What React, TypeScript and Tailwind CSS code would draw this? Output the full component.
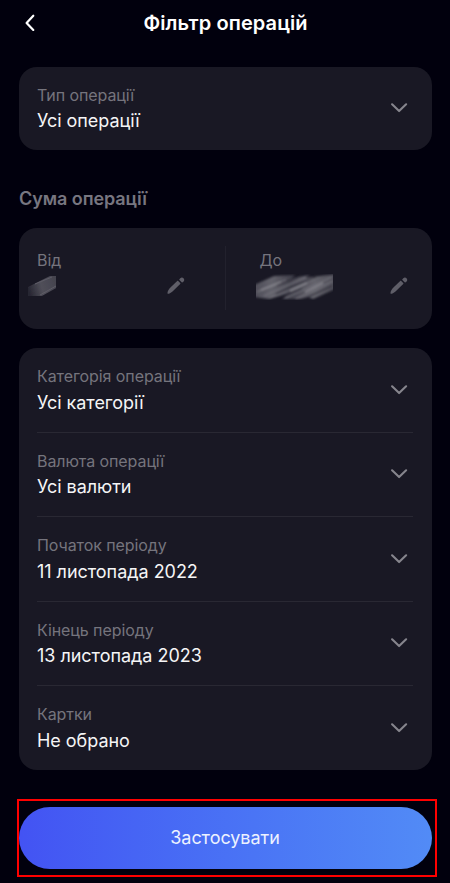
import type { ReactNode } from "react";

const filters = [
  { label: "Категорія операції", value: "Усі категорії" },
  { label: "Валюта операції", value: "Усі валюти" },
  { label: "Початок періоду", value: "11 листопада 2022" },
  { label: "Кінець періоду", value: "13 листопада 2023" },
  { label: "Картки", value: "Не обрано" },
];

function Chevron() {
  return (
    <svg className="mr-[5px] h-[10px] w-[18px] shrink-0" viewBox="0 0 18 10" fill="none">
      <path d="M2.100 1.300 9.100 8.100 16.100 1.300" stroke="#86858d" strokeWidth="2.1" strokeLinecap="round" strokeLinejoin="round" />
    </svg>
  );
}

function Pencil() {
  return (
    <svg className="h-[18px] w-[18px] shrink-0" viewBox="0 0 18 18" fill="#5f5e68">
      <path d="M.7 17.700c-.5-.5 0-2.500.8-3.800.6-1 1.300-1.800 2.200-2.700l6.500-6.200c.3-.3.7-.3 1 0l2 2c.3.3.3.7 0 1l-6.400 6.300c-.9.900-1.700 1.600-2.700 2.200-1.200.8-3 1.600-3.400 1.200Z" />
      <path d="M12.400 4.100c-.3-.3-.3-.6 0-.9l.9-1c1-1 2.400-.8 3.200 0 .8.900 1.100 2.200.1 3.200l-1 .9c-.3.300-.6.300-.9 0Z" />
    </svg>
  );
}

function Field({ label, value }: { label: string; value: string }) {
  return (
    <div className="flex h-full items-center justify-between">
      <div className="pt-[0.500px]">
        <div className="text-[16px] leading-[24px] tracking-[-0.080px] text-[#75747d]">{label}</div>
        <div className="mt-[0.500px] text-[18px] leading-[27px] tracking-[-0.030px] text-[#f5f5f6]">{value}</div>
      </div>
      <Chevron />
    </div>
  );
}

function Card({ className, children }: { className: string; children: ReactNode }) {
  return <section className={`rounded-[18px] bg-[#191824] ${className}`}>{children}</section>;
}

function SmallSmudge() {
  return (
    <svg className="mt-[3px] -ml-[9px] h-[20px] w-[28px]" viewBox="0 0 28 20">
      <defs>
        <linearGradient id="smallFill" x1="0" x2="1" y1="0.6" y2="0.4">
          <stop offset="0" stopColor="#272632" />
          <stop offset="0.45" stopColor="#504f59" />
          <stop offset="1" stopColor="#44434e" />
        </linearGradient>
        <filter id="smallBlur"><feGaussianBlur stdDeviation="0.7" /></filter>
      </defs>
      <g filter="url(#smallBlur)">
        <path d="M0 11 22 0H30V11L12 21H0Z" fill="url(#smallFill)" />
        <path d="m7 8 17-7M12 19l16-9" stroke="#5d5c66" strokeWidth="1" />
      </g>
    </svg>
  );
}

function LargeSmudge() {
  return (
    <svg className="mt-px -ml-[4px] h-[26px] w-[77px]" viewBox="0 0 77 26">
      <defs>
        <linearGradient id="largeFill">
          <stop offset="0" stopColor="#4c4b56" />
          <stop offset="0.22" stopColor="#64636c" />
          <stop offset="0.45" stopColor="#43424d" />
          <stop offset="0.75" stopColor="#64636c" />
          <stop offset="1" stopColor="#4a4953" />
        </linearGradient>
        <filter id="largeBlur" x="-10%" y="-20%" width="120%" height="140%"><feGaussianBlur stdDeviation="1" /></filter>
      </defs>
      <g filter="url(#largeBlur)">
        <path d="M-2 11 18 2 39 1 35 4 54 1 49 4 79 0V15L57 25 52 23 45 25 26 25 35 19 13 25-2 23Z" fill="url(#largeFill)" />
        <path d="M1 18 30 6M8 22 50 3M14 24 59 5M29 24 76 3M40 25 77 7" stroke="#74737c" strokeWidth="1.200" />
        <path d="M21 11 42 3M20 20 60 3M30 22 46 15M52 23 76 12" stroke="#2c2b37" strokeWidth="1.300" />
        <path d="m5 16 20-8M34 17 51 9M49 18l18-9" stroke="#93929a" strokeWidth="1.200" />
      </g>
    </svg>
  );
}

export default function App() {
  return (
    <main className="flex h-[883px] w-[450px] flex-col overflow-hidden bg-[#01000d] font-['Inter','Liberation_Sans',sans-serif]">
      <header className="grid h-[66.500px] shrink-0 grid-cols-[60px_1fr_60px] items-start pt-[8px]">
        <button aria-label="Назад" className="ml-[24px] mt-[6px] w-[12px]">
          <svg className="h-[18px] w-[12px]" viewBox="0 0 12 18" fill="none">
            <path d="M9.300 1.700 2.600 8.900 9.300 15.900" stroke="white" strokeWidth="2.200" strokeLinecap="round" strokeLinejoin="round" />
          </svg>
        </button>
        <h1 className="pl-px text-center text-[20px] leading-[30px] font-semibold tracking-[0.080px] text-white">Фільтр операцій</h1>
      </header>

      <Card className="mx-[18.500px] h-[83.500px] shrink-0 px-[18.500px]">
        <Field label="Тип операції" value="Усі операції" />
      </Card>

      <h2 className="mt-[37px] ml-[19px] h-[40.500px] shrink-0 text-[18px] leading-[24px] font-semibold tracking-[-0.080px] text-[#777680]">Сума операції</h2>

      <Card className="mx-[18.500px] flex h-[101.500px] shrink-0 items-center">
        <div className="flex h-[64px] w-[207px] justify-between border-r border-[#22212d] pr-[40px] pl-[18.500px]">
          <div className="pt-px">
            <div className="text-[16px] leading-[26px] tracking-[-0.080px] text-[#75747d]">Від</div>
            <SmallSmudge />
          </div>
          <div className="pt-[30px]"><Pencil /></div>
        </div>
        <div className="flex h-[64px] flex-1 justify-between pr-[23.500px] pl-[34px]">
          <div className="pt-px">
            <div className="text-[16px] leading-[26px] tracking-[-0.080px] text-[#75747d]">До</div>
            <LargeSmudge />
          </div>
          <div className="pt-[30px]"><Pencil /></div>
        </div>
      </Card>

      <Card className="mx-[18.500px] mt-[19px] h-[421.500px] shrink-0 px-[18.500px]">
        {filters.map((item, i) => (
          <div key={item.label} className={i < 4 ? "h-[84.500px] border-b border-[#292833]" : "h-[83.500px]"}>
            <Field {...item} />
          </div>
        ))}
      </Card>

      <div className="mt-[29.500px] ml-[17px] h-[78px] w-[420px] shrink-0 border-2 border-[#ff0000] pt-[5.500px]">
        <button className="ml-[-0.500px] h-[62px] w-[413px] rounded-full bg-linear-to-r from-[#4353f3] to-[#528bf6] text-[18px] tracking-[-0.050px] text-[#edf2ff]">Застосувати</button>
      </div>
    </main>
  );
}
